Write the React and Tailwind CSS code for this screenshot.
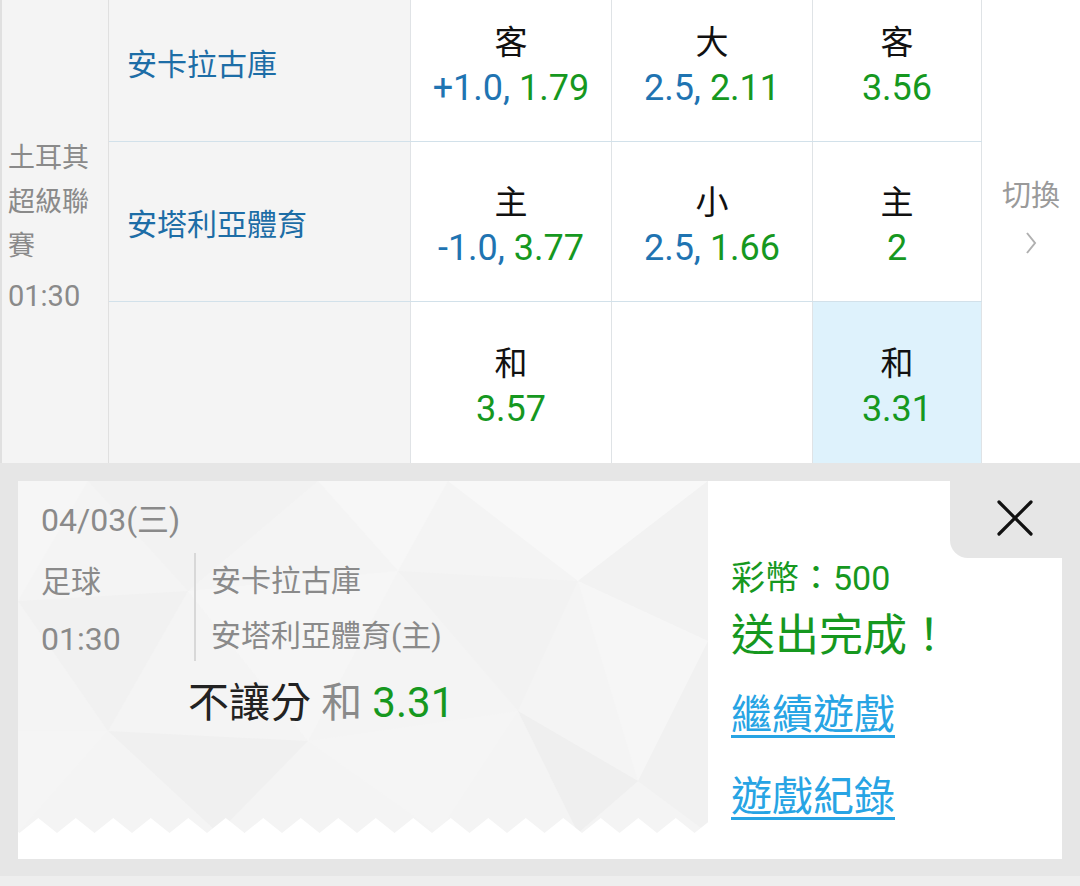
import React from 'react';

const FONT = { fontFamily: 'Roboto, "Noto Sans CJK TC", "Noto Sans", sans-serif' };

const rows = [
  { team: '安卡拉古庫', cells: [
    { label: '客', parts: [['+1.0, ', 'b'], ['1.79', 'g']] },
    { label: '大', parts: [['2.5, ', 'b'], ['2.11', 'g']] },
    { label: '客', parts: [['3.56', 'g']] },
  ] },
  { team: '安塔利亞體育', cells: [
    { label: '主', parts: [['-1.0, ', 'b'], ['3.77', 'g']] },
    { label: '小', parts: [['2.5, ', 'b'], ['1.66', 'g']] },
    { label: '主', parts: [['2', 'g']] },
  ] },
  { team: '', cells: [
    { label: '和', parts: [['3.57', 'g']] },
    null,
    { label: '和', parts: [['3.31', 'g']], active: true },
  ] },
];

const colW = ['w-[201px]', 'w-[201px]', 'w-[169px]'];
const rowH = ['h-[160px]', 'h-[160px]', 'h-[161px]'];

function OddsCell({ cell, w }) {
  return (
    <div className={`${w} shrink-0 flex flex-col items-center justify-center pt-[8px] border-r border-[#dfe3e6] ${cell && cell.active ? 'bg-[#def2fc]' : 'bg-white'}`}>
      {cell && (
        <>
          <div className="text-[33px] leading-[44px] text-[#111]">{cell.label}</div>
          <div className="text-[36px] leading-[46px]">
            {cell.parts.map(([t, c], i) => (
              <span key={i} className={c === 'b' ? 'text-[#1f74b2]' : 'text-[#16981f]'}>{t}</span>
            ))}
          </div>
        </>
      )}
    </div>
  );
}

function PolyBg() {
  const period = 37.5;
  let x = 1.5 - period;
  const pts = ['0,378', '0,352'];
  while (x < 700) {
    pts.push(`${x},352`, `${x + period / 2},337`, `${x + period},352`);
    x += period;
  }
  pts.push('690,352', '690,378');
  return (
    <svg className="absolute inset-0" width="690" height="378" viewBox="0 0 690 378">
      <rect x="0" y="0" width="690" height="378" fill="#f4f4f4" />
      <polygon points="0,0 70,0 0,120" fill="#f6f6f6" />
      <polygon points="70,0 300,0 170,110" fill="#f2f2f2" />
      <polygon points="300,0 430,0 380,90" fill="#f7f7f7" />
      <polygon points="430,0 690,0 560,100" fill="#f8f8f8" />
      <polygon points="560,100 690,0 690,160" fill="#f2f2f2" />
      <polygon points="0,120 170,110 90,250" fill="#f1f1f1" />
      <polygon points="170,110 380,90 290,260" fill="#f6f6f6" />
      <polygon points="380,90 560,100 500,230" fill="#f2f2f2" />
      <polygon points="560,100 690,160 620,300" fill="#f6f6f6" />
      <polygon points="0,250 90,250 0,352" fill="#f5f5f5" />
      <polygon points="90,250 290,260 200,352" fill="#f0f0f0" />
      <polygon points="290,260 500,230 420,352" fill="#f5f5f5" />
      <polygon points="500,230 620,300 560,352" fill="#efefef" />
      <polygon points="620,300 690,160 690,352" fill="#f1f1f1" />
      <polygon points={pts.join(' ')} fill="#ffffff" />
    </svg>
  );
}

export default function App() {
  return (
    <div className="w-[1080px] h-[886px] bg-[#e6e6e6] overflow-hidden" style={FONT}>
      {/* odds table */}
      <div className="h-[463px] overflow-hidden bg-white">
        <div className="-mt-[18px] flex">
          <div className="w-[109px] shrink-0 h-[481px] bg-[#f4f4f4] border-l-2 border-r border-[#e0e0e0] flex flex-col justify-center pl-[6px] pt-[14px] text-[#8a8a8a] text-[27px] leading-[44px]">
            <div>土耳其</div>
            <div>超級聯</div>
            <div>賽</div>
            <div className="text-[29px] leading-[56px]">01:30</div>
          </div>
          <div className="flex flex-col">
            {rows.map((r, i) => (
              <div key={i} className={`flex ${rowH[i]} ${i < 2 ? 'border-b border-[#d2e1ea]' : ''}`}>
                <div className="w-[302px] shrink-0 bg-[#f4f4f4] border-r border-[#e0e3e6] flex items-center pl-[18px] pt-[6px] text-[30px] text-[#1d6da6]">
                  {r.team}
                </div>
                {r.cells.map((c, j) => (
                  <OddsCell key={j} cell={c} w={colW[j]} />
                ))}
              </div>
            ))}
          </div>
          <div className="flex-1 h-[481px] bg-white flex flex-col items-center justify-center pb-[15px] text-[#9a9a9a]">
            <div className="text-[29px] leading-[40px]">切換</div>
            <svg width="12" height="24" viewBox="0 0 12 24" className="mt-[15px]">
              <polyline points="2,2 10,12 2,22" fill="none" stroke="#b0b0b0" strokeWidth="2" />
            </svg>
          </div>
        </div>
      </div>

      {/* bet result card */}
      <div className="mx-[18px] mt-[18px] h-[378px] flex">
        <div className="relative w-[690px] shrink-0 overflow-hidden">
          <PolyBg />
          <div className="relative pl-[23px] pt-[19px] text-[#8a8a8a]">
            <div className="text-[32px] leading-[40px]">04/03(三)</div>
            <div className="flex h-[108px] mt-[13px]">
              <div className="w-[153px] shrink-0 text-[30px]">
                <div className="h-[56px] flex items-center">足球</div>
                <div className="h-[60px] flex items-center text-[32px]">01:30</div>
              </div>
              <div className="border-l-2 border-[#d8d8d8] pl-[15px] text-[30px]">
                <div className="h-[54px] flex items-center">安卡拉古庫</div>
                <div className="h-[56px] flex items-center">安塔利亞體育(主)</div>
              </div>
            </div>
            <div className="ml-[147px] mt-[18px] text-[41px] leading-[48px]">
              <span className="text-[#222]">不讓分</span>
              <span className="text-[#8a8a8a]"> 和 </span>
              <span className="text-[#16981f] text-[42px]">3.31</span>
            </div>
          </div>
        </div>
        <div className="flex-1 bg-white flex flex-col">
          <div className="flex justify-end">
            <div className="w-[112px] h-[77px] bg-[#e6e6e6] rounded-bl-[18px] flex items-center justify-center pl-[18px] pb-[4px]">
              <svg width="38" height="38" viewBox="0 0 38 38">
                <path d="M3 3 L35 35 M35 3 L3 35" stroke="#111" strokeWidth="3.2" strokeLinecap="round" />
              </svg>
            </div>
          </div>
          <div className="pl-[23px] text-[#16981f]">
            <div className="text-[34px] leading-[40px]">彩幣：500</div>
            <div className="text-[44px] leading-[52px] mt-[12px]">送出完成！</div>
            <div className="text-[41px] leading-[52px] mt-[27px] text-[#27a4e4] underline decoration-[3px] underline-offset-[6px]">繼續遊戲</div>
            <div className="text-[41px] leading-[52px] mt-[30px] text-[#27a4e4] underline decoration-[3px] underline-offset-[6px]">遊戲紀錄</div>
          </div>
        </div>
      </div>
      <div className="mt-[17px] h-[10px] bg-[#eeeeee]" />
    </div>
  );
}
